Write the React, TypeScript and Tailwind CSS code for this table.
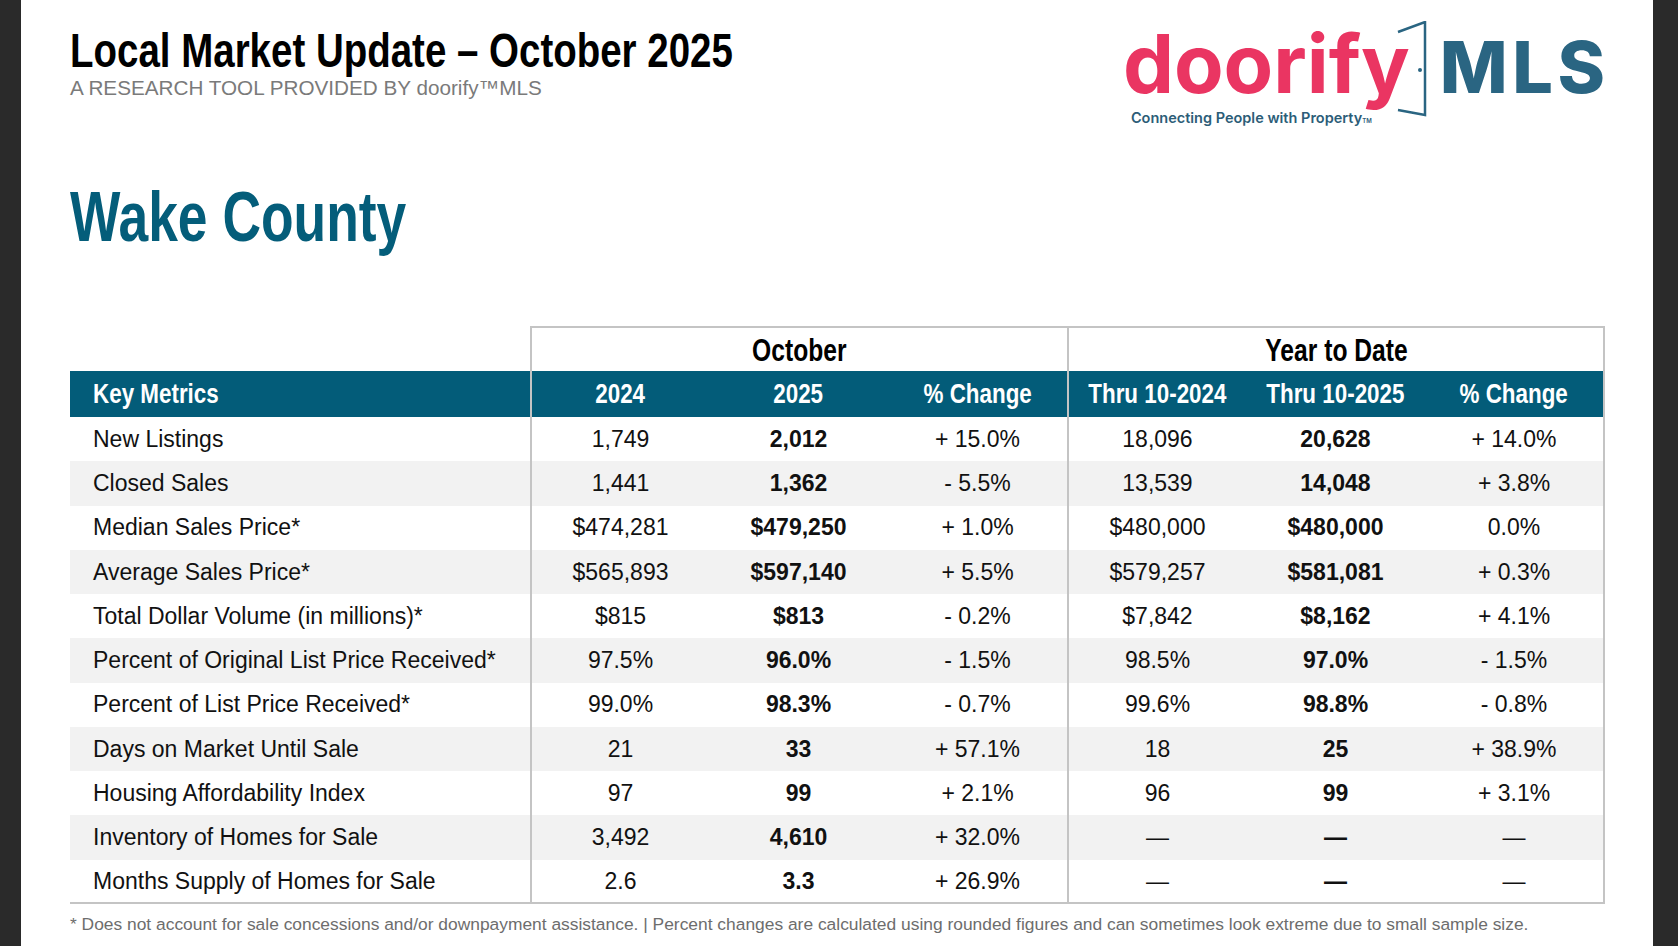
import { FC, ReactNode } from 'react';

const BODY = "font-['Liberation_Sans',Arial,sans-serif]";

interface Row {
  label: string;
  cells: string[];
}

const rows: Row[] = [
  { label: 'New Listings', cells: ['1,749', '2,012', '+ 15.0%', '18,096', '20,628', '+ 14.0%'] },
  { label: 'Closed Sales', cells: ['1,441', '1,362', '- 5.5%', '13,539', '14,048', '+ 3.8%'] },
  { label: 'Median Sales Price*', cells: ['$474,281', '$479,250', '+ 1.0%', '$480,000', '$480,000', '0.0%'] },
  { label: 'Average Sales Price*', cells: ['$565,893', '$597,140', '+ 5.5%', '$579,257', '$581,081', '+ 0.3%'] },
  { label: 'Total Dollar Volume (in millions)*', cells: ['$815', '$813', '- 0.2%', '$7,842', '$8,162', '+ 4.1%'] },
  { label: 'Percent of Original List Price Received*', cells: ['97.5%', '96.0%', '- 1.5%', '98.5%', '97.0%', '- 1.5%'] },
  { label: 'Percent of List Price Received*', cells: ['99.0%', '98.3%', '- 0.7%', '99.6%', '98.8%', '- 0.8%'] },
  { label: 'Days on Market Until Sale', cells: ['21', '33', '+ 57.1%', '18', '25', '+ 38.9%'] },
  { label: 'Housing Affordability Index', cells: ['97', '99', '+ 2.1%', '96', '99', '+ 3.1%'] },
  { label: 'Inventory of Homes for Sale', cells: ['3,492', '4,610', '+ 32.0%', '—', '—', '—'] },
  { label: 'Months Supply of Homes for Sale', cells: ['2.6', '3.3', '+ 26.9%', '—', '—', '—'] },
];

const headers = ['2024', '2025', '% Change', 'Thru 10-2024', 'Thru 10-2025', '% Change'];

// borders for the value columns: 0 and 3 open a group, 5 closes the table
const edge = (i: number) => {
  if (i === 0 || i === 3) return 'border-l-2 border-[#c4c4c4]';
  if (i === 5) return 'border-r-2 border-[#c4c4c4]';
  return '';
};

// no narrow face installed, so squeeze the bold sans to a condensed look
const Cond: FC<{ children: ReactNode; className?: string }> = ({ children, className = '' }) => (
  <span className={`inline-block whitespace-nowrap ${BODY} font-bold ${className}`}>{children}</span>
);

const Logo: FC = () => (
  <div className="flex items-start mt-[-3px]">
    <div className="flex flex-col">
      <span className="font-['Inter',sans-serif] font-bold text-[81px] leading-none text-[#ea3562]">doorify</span>
      <span className="font-['Inter',sans-serif] font-semibold text-[14.5px] leading-none mt-[6px] ml-[8px] text-[#2c5d78] whitespace-nowrap">
        Connecting People with Property<span className="text-[6px]">TM</span>
      </span>
    </div>
    <svg width="36" height="100" viewBox="0 0 36 100" className="ml-[-17px] mt-[-3px] shrink-0" fill="none">
      <path d="M5 11 L32 1 L32 94 L5 89" stroke="#2a6582" strokeWidth="2.5" />
      <circle cx="27" cy="49" r="2" fill="#2a6582" />
    </svg>
    <span className="font-['Inter',sans-serif] font-extrabold text-[72px] leading-none tracking-[4.5px] ml-[11px] mr-[-4.5px] mt-[7px] text-[#2a6582]">
      MLS
    </span>
  </div>
);

export default function App() {
  return (
    <div className="w-full h-[946px] bg-[#2a2a2a] flex overflow-hidden">
      <div className="ml-[21px] w-[1632px] h-full bg-white pl-[49px] pr-[48px] pt-[27px] flex flex-col">
        <div className="flex justify-between items-start h-[71px]">
          <div className="flex flex-col items-start">
            <h1 className="leading-none">
              <Cond className="text-[47.5px] leading-none text-black scale-x-[0.81] origin-left">
                Local Market Update – October 2025
              </Cond>
            </h1>
            <p className={`${BODY} text-[20.7px] leading-none mt-[3.5px] text-[#7a7a7a] whitespace-nowrap`}>
              A RESEARCH TOOL PROVIDED BY doorify™MLS
            </p>
          </div>
          <Logo />
        </div>

        <h2 className="leading-none mt-[84px]">
          <Cond className="text-[70px] leading-none text-[#045d7a] scale-x-[0.763] origin-left">Wake County</Cond>
        </h2>

        <div className="mt-[74px] grid grid-cols-[460px_179px_179px_179px_179px_179px_180px]">
          <div className="h-[45px]" />
          <div className="col-span-3 h-[45px] flex items-center justify-center border-t-2 border-l-2 border-[#c4c4c4]">
            <Cond className="text-[32px] leading-none text-black scale-x-[0.77]">October</Cond>
          </div>
          <div className="col-span-3 h-[45px] flex items-center justify-center border-t-2 border-l-2 border-r-2 border-[#c4c4c4]">
            <Cond className="text-[32px] leading-none text-black scale-x-[0.77]">Year to Date</Cond>
          </div>

          <div className="h-[46px] bg-[#035c79] flex items-center pl-[23px]">
            <Cond className="text-[28px] leading-none text-white scale-x-[0.8] origin-left">Key Metrics</Cond>
          </div>
          {headers.map((h, i) => (
            <div key={i} className={`h-[46px] bg-[#035c79] flex items-center justify-center ${edge(i)}`}>
              <Cond className="text-[28px] leading-none text-white scale-x-[0.8]">{h}</Cond>
            </div>
          ))}

          {rows.map((row, r) => {
            const bg = r % 2 === 1 ? 'bg-[#f2f2f2]' : 'bg-white';
            const last = r === rows.length - 1 ? 'border-b-2 border-b-[#c4c4c4]' : '';
            return [
              <div key={`${r}-l`} className={`${BODY} h-[44.27px] ${bg} ${last} flex items-center pl-[23px] text-[23px] text-[#111] whitespace-nowrap`}>
                {row.label}
              </div>,
              ...row.cells.map((c, i) => (
                <div
                  key={`${r}-${i}`}
                  className={`${BODY} h-[44.27px] ${bg} ${last} flex items-center justify-center text-[23px] text-[#111] ${edge(i)} ${i === 1 || i === 4 ? 'font-bold' : ''}`}
                >
                  {c}
                </div>
              )),
            ];
          })}
        </div>

        <p className={`${BODY} text-[17.4px] leading-[18px] mt-[11px] text-[#6d6d6d] whitespace-nowrap`}>
          * Does not account for sale concessions and/or downpayment assistance. | Percent changes are calculated using rounded figures and can sometimes look extreme due to small sample size.
        </p>
      </div>
    </div>
  );
}
